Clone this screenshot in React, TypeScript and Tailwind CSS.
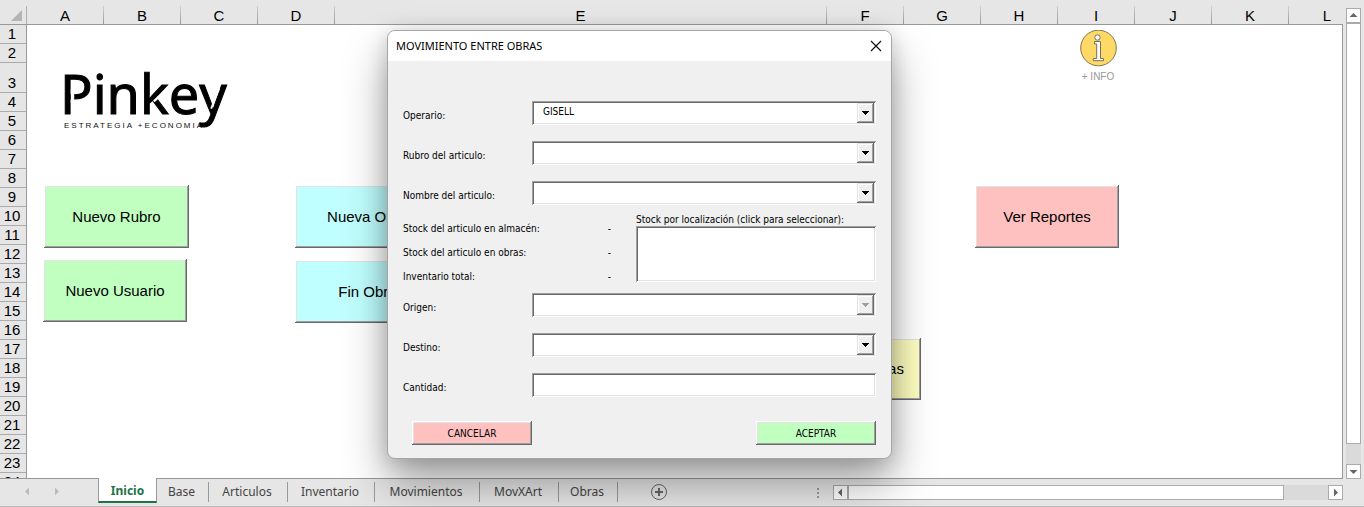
import type { ReactNode } from "react";

const COLUMNS = [
  { name: "A", width: "w-[77px]" },
  { name: "B", width: "w-[77px]" },
  { name: "C", width: "w-[77px]" },
  { name: "D", width: "w-[77px]" },
  { name: "E", width: "w-[492px]" },
  { name: "F", width: "w-[77px]" },
  { name: "G", width: "w-[77px]" },
  { name: "H", width: "w-[77px]" },
  { name: "I", width: "w-[77px]" },
  { name: "J", width: "w-[77px]" },
  { name: "K", width: "w-[77px]" },
  { name: "L", width: "w-[77px]" },
];

const ROWS = Array.from({ length: 24 }, (_, i) => i + 1);

const TABS = [
  { name: "Base", width: "w-[52px]" },
  { name: "Articulos", width: "w-[79px]" },
  { name: "Inventario", width: "w-[87px]" },
  { name: "Movimientos", width: "w-[105px]" },
  { name: "MovXArt", width: "w-[79px]" },
  { name: "Obras", width: "w-[59px]" },
];

const SUNKEN =
  "p-[2px] shadow-[inset_1px_1px_0_#a0a0a0,inset_-1px_-1px_0_#fff,inset_2px_2px_0_#696969,inset_-2px_-2px_0_#e3e3e3]";
const RAISED =
  "shadow-[inset_-1px_-1px_0_#696969,inset_1px_1px_0_#fff,inset_-2px_-2px_0_#a0a0a0,inset_2px_2px_0_#e3e3e3]";

function SheetButton({ className, children }: { className: string; children: ReactNode }) {
  return (
    <button
      type="button"
      className={`absolute whitespace-nowrap text-[15px] leading-5 text-black ${RAISED} ${className}`}
    >
      {children}
    </button>
  );
}

function Logo() {
  return (
    <svg
      className="absolute left-[34px] top-[30px] overflow-visible"
      width="190"
      height="80"
      viewBox="0 0 190 80"
      role="img"
      aria-label="Pinkey"
    >
      <text
        x="-1"
        y="58.500"
        fontFamily="Noto Sans, sans-serif"
        fontSize="54"
        fill="#000"
        stroke="#000"
        strokeWidth="1"
        style={{ fontKerning: "none" }}
      >
        Pinkey
      </text>
      <path d="M9.800 34 H13.200 V48 H9.800 Z" fill="#fff" />
      <path d="M92 45.500 L97.500 40.500 L99 42.200 L93.500 47.200 Z" fill="#fff" />
      <path d="M151 54 L159 34 L157.300 33.300 L149.300 53.300 Z" fill="#fff" />
    </svg>
  );
}

function InfoButton() {
  return (
    <button type="button" className="absolute left-[1046px] top-[5px] flex w-[50px] flex-col items-center gap-1">
      <svg width="37" height="37" viewBox="0 0 37 37" aria-hidden="true">
        <circle cx="18.500" cy="18" r="17.800" fill="#ffd966" stroke="#80755a" strokeWidth="1" />
        <circle cx="17.500" cy="7.500" r="2.700" fill="#fff" stroke="#75705f" strokeWidth="1" />
        <path
          d="M14.500 11.500 H20.500 V28.500 H23.500 V30.700 H13.300 V28.500 H16.700 V14 H14.500 Z"
          fill="#fff"
          stroke="#75705f"
          strokeWidth="1"
        />
      </svg>
      <span className="whitespace-nowrap text-[10px] leading-3 text-[#999]">+ INFO</span>
    </button>
  );
}

function Arrow({ dir }: { dir: "up" | "down" | "left" | "right" }) {
  const paths = {
    up: "M4.500 2 L8.500 6 H0.500 Z",
    down: "M0.500 3 H8.500 L4.500 7 Z",
    left: "M6 0.500 V8.500 L2 4.500 Z",
    right: "M3 0.500 V8.500 L7 4.500 Z",
  };
  return (
    <svg width="9" height="9" viewBox="0 0 9 9" aria-hidden="true">
      <path d={paths[dir]} fill="currentColor" />
    </svg>
  );
}

function ScrollButton({ dir, label }: { dir: "up" | "down" | "left" | "right"; label: string }) {
  return (
    <button
      type="button"
      aria-label={label}
      className="flex size-[15px] shrink-0 items-center justify-center border border-[#ababab] bg-white text-[#666]"
    >
      <Arrow dir={dir} />
    </button>
  );
}

function Combo({ id, label, value, disabled }: { id: string; label: string; value?: string; disabled?: boolean }) {
  return (
    <div className="flex items-start">
      <label htmlFor={id} className="w-[129px] shrink-0 pt-2 leading-[14px]">
        {label}
      </label>
      <div className={`relative flex h-6 flex-1 bg-white ${SUNKEN}`}>
        <select
          id={id}
          disabled={disabled}
          className="w-full appearance-none bg-white pb-[2px] pl-[9px] leading-[14px] text-black outline-none"
        >
          <option>{value ?? ""}</option>
        </select>
        <span
          className={`pointer-events-none absolute bottom-[2px] right-[2px] top-[2px] flex w-[17px] items-center justify-center bg-[#f0f0f0] shadow-[inset_-1px_-1px_0_#696969,inset_1px_1px_0_#e3e3e3,inset_-2px_-2px_0_#a0a0a0,inset_2px_2px_0_#fff] ${
            disabled ? "text-[#a0a0a0]" : "text-black"
          }`}
        >
          <svg width="7" height="4" viewBox="0 0 7 4" shapeRendering="crispEdges" aria-hidden="true">
            <path d="M0 0 H7 V1 H6 V2 H5 V3 H4 V4 H3 V3 H2 V2 H1 V1 H0 Z" fill="currentColor" />
          </svg>
        </span>
      </div>
    </div>
  );
}

function StockLine({ label }: { label: string }) {
  return (
    <div className="flex h-6 items-center justify-between">
      <span>{label}</span>
      <span>-</span>
    </div>
  );
}

function TransferDialog() {
  return (
    <div
      role="dialog"
      aria-labelledby="dialog-title"
      className="absolute left-[387px] top-[30px] w-[505px] overflow-hidden rounded-lg border border-[#a6a6a6] bg-[#f0f0f0] font-['DejaVu_Sans_Condensed','DejaVu_Sans',sans-serif] text-[10px] text-black shadow-[0_24px_44px_rgba(0,0,0,0.36),0_2px_20px_rgba(0,0,0,0.16)]"
    >
      <div className="flex h-[30px] items-center justify-between bg-white pl-2 pr-[9px]">
        <h1 id="dialog-title" className="font-['Noto_Sans',sans-serif] text-[11px]">
          MOVIMIENTO ENTRE OBRAS
        </h1>
        <button type="button" aria-label="Cerrar">
          <svg width="12" height="12" viewBox="0 0 12 12" aria-hidden="true">
            <path d="M1 1 L11 11 M11 1 L1 11" stroke="#111" strokeWidth="1.200" fill="none" />
          </svg>
        </button>
      </div>
      <form className="px-[15px] pb-[13px] pt-10">
        <div className="flex flex-col gap-4">
          <Combo id="operario" label="Operario:" value="GISELL" />
          <Combo id="rubro" label="Rubro del articulo:" />
          <Combo id="nombre" label="Nombre del articulo:" />
        </div>
        <div className="flex justify-between pb-[5px] pt-[9px]">
          <div className="w-[208px] pt-[2px]">
            <StockLine label="Stock del articulo en almacén:" />
            <StockLine label="Stock del articulo en obras:" />
            <StockLine label="Inventario total:" />
          </div>
          <div className="w-[240px]">
            <label htmlFor="stock-list" className="block whitespace-nowrap leading-3">
              Stock por localización (click para seleccionar):
            </label>
            <div className={`h-14 bg-white ${SUNKEN}`}>
              <select id="stock-list" size={3} className="block h-full w-full overflow-hidden bg-white outline-none" />
            </div>
          </div>
        </div>
        <div className="flex flex-col gap-4">
          <Combo id="origen" label="Origen:" disabled />
          <Combo id="destino" label="Destino:" />
          <div className="flex items-start">
            <label htmlFor="cantidad" className="w-[129px] shrink-0 pt-2 leading-[14px]">
              Cantidad:
            </label>
            <div className={`flex h-6 flex-1 bg-white ${SUNKEN}`}>
              <input id="cantidad" type="text" className="w-full bg-white px-2 outline-none" />
            </div>
          </div>
        </div>
        <div className="mt-6 flex justify-between pl-[9px]">
          <button type="button" className={`h-6 w-[120px] bg-[#ffc0c0] ${RAISED}`}>
            CANCELAR
          </button>
          <button type="button" className={`h-6 w-[120px] bg-[#c0ffc0] ${RAISED}`}>
            ACEPTAR
          </button>
        </div>
      </form>
    </div>
  );
}

export default function App() {
  return (
    <div className="relative flex h-screen flex-col overflow-hidden bg-[#e6e6e6] font-['Liberation_Sans',sans-serif] text-black">
      <div className="flex min-h-0 flex-1">
        <div className="flex min-w-0 flex-1 flex-col">
          <div className="flex h-[25px] shrink-0 items-end overflow-hidden border-b border-[#999]">
            <div className="flex h-[18px] w-[27px] shrink-0 justify-end">
              <svg width="16" height="18" viewBox="0 0 16 18" aria-hidden="true">
                <path d="M12 4 V15 H1 Z" fill="#b4b4b4" />
              </svg>
              <span className="h-full w-px bg-[#b0b0b0]" />
            </div>
            {COLUMNS.map((column) => (
              <div key={column.name} className={`flex h-[18px] shrink-0 ${column.width}`}>
                <span className="flex-1 text-center text-[15px] leading-5">{column.name}</span>
                <span className="h-full w-px bg-gradient-to-b from-[#d0d0d0] to-[#999]" />
              </div>
            ))}
          </div>
          <div className="flex min-h-0 flex-1 overflow-hidden border-b border-r border-[#999]">
            <div className="w-[27px] shrink-0 border-r border-[#999]">
              {ROWS.map((row) => (
                <div
                  key={row}
                  className={`flex items-end justify-center border-b border-[#ababab] pr-[2px] text-[15px] leading-[18px] ${
                    row === 3 ? "h-[30px]" : "h-[19px]"
                  }`}
                >
                  {row}
                </div>
              ))}
            </div>
            <div className="relative flex-1 overflow-hidden bg-white">
              <Logo />
              <span className="absolute left-[37px] top-[96px] whitespace-nowrap text-[8px] leading-[10px] tracking-[2px] text-[#111]">
                ESTRATEGIA +ECONOMIA
              </span>
              <SheetButton className="left-[17px] top-[160px] h-[63px] w-[145px] bg-[#c0ffc0]">Nuevo Rubro</SheetButton>
              <SheetButton className="left-[16px] top-[234px] h-[63px] w-[144px] bg-[#c0ffc0]">Nuevo Usuario</SheetButton>
              <SheetButton className="left-[268px] top-[160px] h-[63px] w-[145px] bg-[#c0ffff]">Nueva Obra</SheetButton>
              <SheetButton className="left-[268px] top-[235px] h-[63px] w-[145px] bg-[#c0ffff]">Fin Obra</SheetButton>
              <SheetButton className="left-[779px] top-[313px] h-[62px] w-[115px] bg-[#ffffc0]">Entre Obras</SheetButton>
              <SheetButton className="left-[948px] top-[160px] h-[63px] w-[144px] bg-[#ffc0c0]">Ver Reportes</SheetButton>
              <InfoButton />
            </div>
          </div>
        </div>
        <div className="flex w-[21px] shrink-0 flex-col items-center pt-2">
          <ScrollButton dir="up" label="Subir" />
          <div className="flex w-[15px] flex-1 flex-col bg-[#dadada] pb-5">
            <div className="flex-1 border border-[#ababab] bg-white" />
          </div>
          <ScrollButton dir="down" label="Bajar" />
        </div>
      </div>
      <div className="flex h-7 shrink-0 items-start border-b border-[#bbb] pr-[21px] font-['Noto_Sans',sans-serif] text-xs text-[#444]">
        <div className="flex h-[25px] w-[98px] shrink-0 items-center gap-5 pl-[23px] text-[#bbb]">
          <Arrow dir="left" />
          <Arrow dir="right" />
        </div>
        <button
          type="button"
          className="-mt-px h-[25px] w-[59px] shrink-0 border-x border-b-2 border-x-[#999] border-b-[#217346] bg-white pt-[3px] font-bold text-[#217346]"
        >
          Inicio
        </button>
        {TABS.map((tab) => (
          <div key={tab.name} className={`flex h-[25px] shrink-0 items-center ${tab.width}`}>
            <button type="button" className="flex-1 pr-[2px] text-center">
              {tab.name}
            </button>
            <span className="h-5 w-px bg-[#999]" />
          </div>
        ))}
        <button type="button" aria-label="Hoja nueva" className="ml-8 mt-1 shrink-0 text-[#666]">
          <svg width="18" height="18" viewBox="0 0 18 18" fill="none" stroke="currentColor" aria-hidden="true">
            <circle cx="9" cy="9" r="7.500" strokeWidth="1" />
            <path d="M9 5 V13 M5 9 H13" strokeWidth="2" />
          </svg>
        </button>
        <div className="flex h-[27px] flex-1 items-center justify-end pr-[14px]">
          <svg width="2" height="10" viewBox="0 0 2 10" aria-hidden="true">
            <path d="M0 0 H2 V2 H0 Z M0 4 H2 V6 H0 Z M0 8 H2 V10 H0 Z" fill="#999" />
          </svg>
        </div>
        <div className="mt-[6px] flex w-[510px] shrink-0">
          <ScrollButton dir="left" label="Izquierda" />
          <div className="flex flex-1 bg-[#dadada] pr-11">
            <div className="flex-1 border border-[#ababab] bg-white" />
          </div>
          <ScrollButton dir="right" label="Derecha" />
        </div>
      </div>
      <TransferDialog />
    </div>
  );
}
